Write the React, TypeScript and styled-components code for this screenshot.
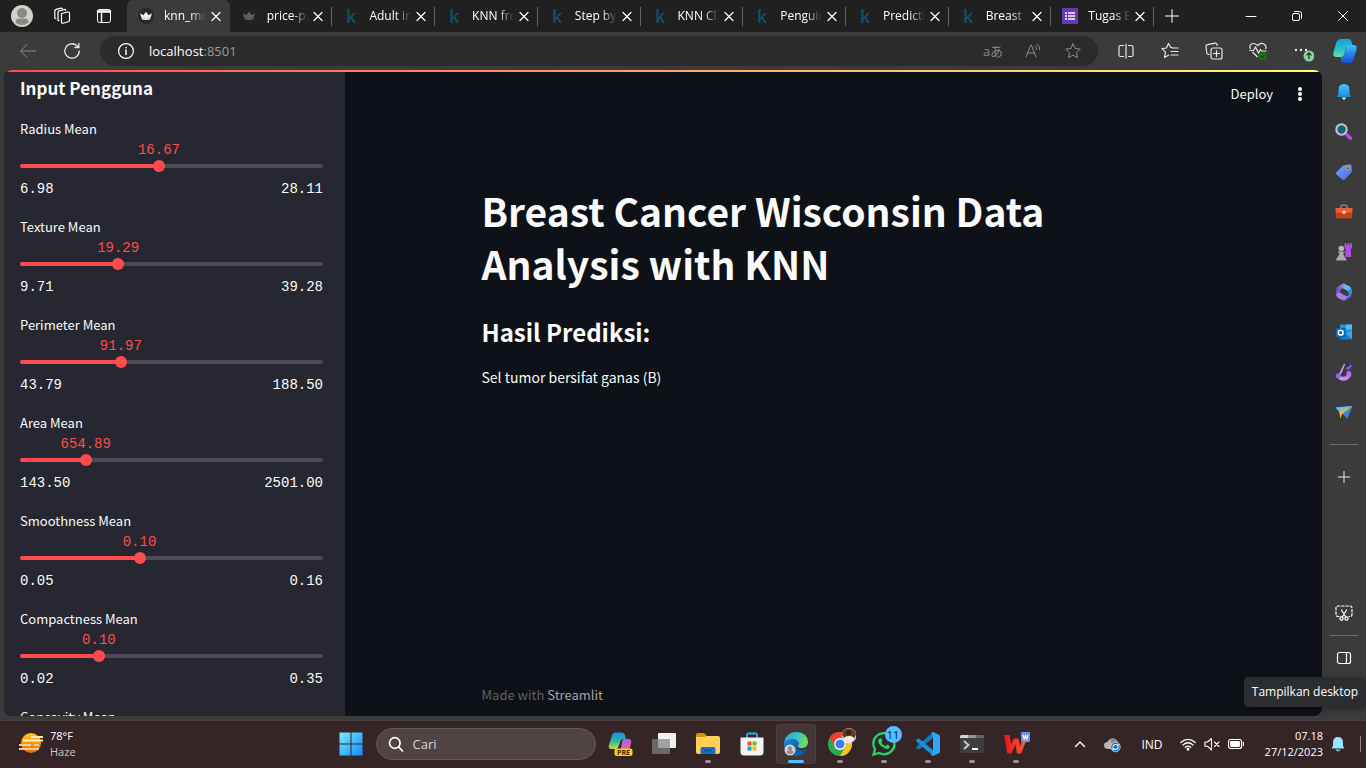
import React, { useState } from "react";
import styled, { createGlobalStyle } from "styled-components";

const uiFont = `"Open Sans", "Noto Sans", sans-serif`;
const appFont = `"Noto Sans CJK SC", "Open Sans", sans-serif`;
const monoFont = `"Liberation Mono", monospace`;

const GlobalStyle = createGlobalStyle`
  *, *::before, *::after { box-sizing: border-box; }
  body { margin: 0; background: #3b3b3b; font-family: ${uiFont}; overflow: hidden; }
  button { border: 0; padding: 0; background: none; color: inherit; font: inherit; cursor: default; }
  svg { display: block; flex: none; }
  h1, h2, p { margin: 0; }
`;

const Desktop = styled.div`
  position: relative;
  display: flex;
  flex-direction: column;
  height: 100vh;
  color: #fff;
`;

/* ---------- Browser tab strip ---------- */

const TabStrip = styled.header`
  display: flex;
  flex: none;
  height: 32px;
  background: #202020;
`;

const ProfileArea = styled.div`
  display: flex;
  width: 127px;
  padding-left: 2px;
`;

const StripButton = styled.button<{ $width?: number }>`
  display: flex;
  align-items: center;
  justify-content: center;
  width: ${(p) => p.$width ?? 46}px;
  height: 32px;
`;

const Tabs = styled.div`
  display: flex;
  flex: 1;
  min-width: 0;
`;

const TabItem = styled.div<{ $active?: boolean; $divided?: boolean }>`
  position: relative;
  display: flex;
  flex: 1 1 0;
  align-items: center;
  min-width: 0;
  padding: 0 6px 0 11px;
  border-radius: 6px 6px 0 0;
  background: ${(p) => (p.$active ? "#3b3b3b" : "transparent")};
  &::after {
    content: "";
    display: ${(p) => (p.$divided ? "block" : "none")};
    position: absolute;
    right: 0;
    top: 7px;
    width: 1px;
    height: 19px;
    background: #666;
  }
`;

const TabButton = styled.button`
  display: flex;
  flex: 1;
  align-items: center;
  gap: 10px;
  min-width: 0;
  height: 32px;
`;

const TabTitle = styled.span`
  flex: 1;
  overflow: hidden;
  margin-right: 2px;
  font-size: 12px;
  line-height: 16px;
  text-align: left;
  white-space: nowrap;
  mask-image: linear-gradient(to right, #000 62%, transparent 100%);
`;

const CloseButton = styled.button`
  display: flex;
  align-items: center;
  justify-content: center;
  width: 16px;
  height: 16px;
`;

const WindowControls = styled.div`
  display: flex;
  margin-left: 38px;
`;

/* ---------- Browser toolbar ---------- */

const Toolbar = styled.div`
  display: flex;
  flex: none;
  align-items: center;
  height: 38px;
  padding-left: 6px;
  background: #3b3b3b;
`;

const ToolButton = styled.button<{ $width?: number; $dim?: boolean }>`
  position: relative;
  display: flex;
  align-items: center;
  justify-content: center;
  width: ${(p) => p.$width ?? 44}px;
  height: 30px;
  color: ${(p) => (p.$dim ? "#8a8a8a" : "#e8e8e8")};
`;

const AddressBar = styled.div`
  display: flex;
  flex: 1;
  align-items: center;
  height: 30px;
  margin: 0 6px;
  padding: 0 5px 0 17px;
  border-radius: 15px;
  background: #2b2b2b;
`;

const Address = styled.a`
  flex: 1;
  margin-left: 14px;
  color: #fff;
  font-size: 13px;
  line-height: 20px;
  text-decoration: none;
`;

const Port = styled.span`
  color: #9a9a9a;
`;

const Translate = styled.span`
  font: 13px/20px "Open Sans", "Noto Sans CJK JP", sans-serif;
`;

/* ---------- Window body ---------- */

const WindowBody = styled.div`
  display: flex;
  flex: 1;
  min-height: 0;
  background: #3b3b3b;
`;

const Page = styled.div`
  position: relative;
  display: flex;
  flex: 1;
  min-width: 0;
  margin: 0 0 4px 4px;
  overflow: hidden;
  border-radius: 8px;
  background: #0e1117;
  color: #fafafa;
  font-family: ${appFont};
`;

const Decoration = styled.div`
  position: absolute;
  z-index: 2;
  inset: 0 0 auto 0;
  height: 2px;
  background: linear-gradient(90deg, #ff4b4b, #fffd80);
`;

const InputPanel = styled.aside`
  flex: none;
  width: 341px;
  overflow: hidden;
  padding: 6px 22px 0 16px;
  background: #262730;
`;

const PanelTitle = styled.h2`
  font-size: 17px;
  font-weight: 700;
  line-height: 24px;
`;

const SliderList = styled.div`
  display: flex;
  flex-direction: column;
  gap: 16px;
  margin-top: 18px;
`;

const Field = styled.div`
  display: flex;
  flex-direction: column;
  height: 82px;
`;

const FieldLabel = styled.label`
  flex: none;
  font-size: 13px;
  line-height: 22px;
`;

const ValueLane = styled.div`
  position: relative;
  flex: none;
  height: 19px;
`;

const Value = styled.output`
  position: absolute;
  bottom: 0;
  transform: translateX(-50%);
  color: #ff4b4b;
  font: 14px/18px ${monoFont};
`;

const Track = styled.div`
  position: relative;
  flex: none;
  height: 14px;
  &::before {
    content: "";
    position: absolute;
    inset: 5px 0;
    border-radius: 2px;
    background: linear-gradient(90deg, #ff4b4b var(--fill), #4b4c57 var(--fill));
  }
`;

const Range = styled.input`
  position: relative;
  appearance: none;
  display: block;
  width: calc(100% + 12px);
  height: 14px;
  margin: 0 -6px;
  background: transparent;
  &::-webkit-slider-thumb {
    appearance: none;
    width: 12px;
    height: 12px;
    border-radius: 50%;
    background: #ff4b4b;
  }
`;

const Bounds = styled.div`
  display: flex;
  flex: none;
  justify-content: space-between;
  margin-top: 7px;
  font: 14px/18px ${monoFont};
`;

const Main = styled.main`
  position: relative;
  display: flex;
  flex: 1;
  flex-direction: column;
  min-width: 0;
`;

const AppHeader = styled.div`
  display: flex;
  flex: none;
  align-items: center;
  justify-content: flex-end;
  height: 48px;
  padding-right: 14px;
  font-size: 13px;
  line-height: 18px;
`;

const KebabButton = styled.button`
  display: flex;
  justify-content: center;
  width: 16px;
  margin-left: 19px;
`;

const Content = styled.section`
  flex: 1;
  width: 100%;
  max-width: 736px;
  margin: 0 auto;
  padding: 66px 16px 0;
`;

const Title = styled.h1`
  font-size: 39px;
  font-weight: 700;
  line-height: 53px;
`;

const Subtitle = styled.h2`
  margin-top: 25px;
  font-size: 24px;
  font-weight: 700;
  line-height: 34px;
`;

const Result = styled.p`
  margin-top: 16px;
  font-size: 14px;
  line-height: 24px;
`;

const Footer = styled.footer`
  width: 100%;
  max-width: 736px;
  margin: 0 auto;
  padding: 0 16px 10px;
  color: #5f6065;
  font-size: 13px;
  line-height: 22px;
`;

const FooterLink = styled.a`
  color: #a3a4a8;
  text-decoration: none;
`;

/* ---------- Edge side bar ---------- */

const EdgeBar = styled.nav`
  display: flex;
  flex: none;
  flex-direction: column;
  align-items: center;
  width: 44px;
  padding: 2px 0 42px;
`;

const EdgeButton = styled.button`
  display: flex;
  flex: none;
  align-items: center;
  justify-content: center;
  width: 44px;
  height: 40px;
`;

const EdgeDivider = styled.div<{ $space: number }>`
  flex: none;
  width: 28px;
  height: 1px;
  margin: ${(p) => p.$space}px 0;
  background: #6c6c6c;
`;

const Spacer = styled.div`
  flex: 1;
`;

const Tooltip = styled.div`
  position: absolute;
  right: 0;
  bottom: 61px;
  z-index: 5;
  height: 30px;
  padding: 0 8px;
  border-radius: 4px;
  background: #2c2d30;
  box-shadow: 0 2px 6px rgba(0, 0, 0, 0.35);
  font-size: 12px;
  line-height: 30px;
`;

/* ---------- Task bar ---------- */

const TaskBar = styled.footer`
  display: grid;
  grid-template-columns: 1fr auto 1fr;
  flex: none;
  height: 48px;
  background: #352526;
  box-shadow: inset 0 1px #4c4141;
`;

const Weather = styled.button`
  display: flex;
  align-items: center;
  gap: 6px;
  padding-left: 18px;
  font-size: 11px;
  line-height: 16px;
  text-align: left;
`;

const WeatherText = styled.span`
  display: grid;
`;

const Muted = styled.span`
  color: #cfc9c9;
`;

const Apps = styled.div`
  display: flex;
  align-items: center;
`;

const AppButton = styled.button<{ $state?: "open" | "active" }>`
  position: relative;
  display: flex;
  align-items: center;
  justify-content: center;
  width: 40px;
  height: 40px;
  margin: 0 2px;
  border-radius: 4px;
  background: ${(p) => (p.$state === "active" ? "#443637" : "transparent")};
  box-shadow: ${(p) => (p.$state === "active" ? "inset 0 0 0 1px #4c3f40" : "none")};
  &::after {
    content: "";
    display: ${(p) => (p.$state ? "block" : "none")};
    position: absolute;
    bottom: 1px;
    width: ${(p) => (p.$state === "active" ? 16 : 6)}px;
    height: 3px;
    border-radius: 2px;
    background: ${(p) => (p.$state === "active" ? "#4cc2ff" : "#9d9393")};
  }
`;

const SearchBox = styled.label`
  display: flex;
  align-items: center;
  gap: 9px;
  width: 220px;
  height: 32px;
  margin: 0 2px 0 3px;
  padding-left: 11px;
  border: 1px solid #635859;
  border-radius: 16px;
  background: #504344;
`;

const SearchInput = styled.input`
  flex: 1;
  min-width: 0;
  padding: 0;
  border: 0;
  outline: 0;
  background: transparent;
  color: #fff;
  font: 13px/20px ${uiFont};
  &::placeholder { color: #d8d3d3; opacity: 1; }
`;

const CountBadge = styled.span`
  position: absolute;
  top: 2px;
  right: 2px;
  width: 17px;
  height: 17px;
  border-radius: 50%;
  background: #4cc2ff;
  color: #0c1b24;
  font-size: 11px;
  line-height: 17px;
  text-align: center;
`;

const Tray = styled.div`
  display: flex;
  align-items: center;
  justify-content: flex-end;
  padding-right: 5px;
`;

const TrayButton = styled.button<{ $width: number }>`
  display: flex;
  align-items: center;
  justify-content: center;
  width: ${(p) => p.$width}px;
  height: 40px;
  font-size: 12px;
`;

const Clock = styled.button`
  display: grid;
  width: 75px;
  font-size: 11px;
  line-height: 16px;
  text-align: right;
  white-space: nowrap;
`;

const ShowDesktop = styled.button`
  width: 1px;
  height: 16px;
  margin-left: 7px;
  background: #8f8687;
`;

/* ---------- Drawings ---------- */

type IconProps = { size?: number; box?: string; width?: number; children: React.ReactNode };

const Line = ({ size = 16, box = "0 0 16 16", width = 1, children }: IconProps) => (
  <svg width={size} height={size} viewBox={box} fill="none" stroke="currentColor" strokeWidth={width} strokeLinecap="round" strokeLinejoin="round" aria-hidden="true">
    {children}
  </svg>
);

const Art = ({ size = 18, box = "0 0 18 18", children }: IconProps) => (
  <svg width={size} height={size} viewBox={box} aria-hidden="true">{children}</svg>
);

const CloseIcon = () => <Line width={1.2}><path d="M4 4.500l8 8M12 4.500l-8 8" /></Line>;

const CrownIcon = ({ dim }: { dim?: boolean }) => (
  <Art size={16} box="0 0 16 16">
    <circle cx="8" cy="8" r="8" fill={dim ? "#232326" : "#262730"} />
    <path d="M2 5.200l3.400 2L8 3.800l2.600 3.400 3.400-2-2 6.300q-4 .9-8 0z" fill={dim ? "#626265" : "#f4f4f6"} />
    <path d="M4.200 9.800q3.800.8 7.600 0" stroke={dim ? "#434346" : "#aeaeb4"} strokeWidth=".6" fill="none" />
  </Art>
);

const KaggleIcon = () => (
  <Art size={16} box="0 0 16 16">
    <text x="3" y="15" fontFamily="Open Sans" fontWeight="600" fontSize="18" fill="#174f68">k</text>
  </Art>
);

const FormsIcon = () => (
  <Art size={16} box="0 0 16 16">
    <rect width="16" height="16" rx="1" fill="#673ab7" />
    <path d="M3 5h2M3 8h2M3 11h2M6 5h7M6 8h7M6 11h7" stroke="#fff" strokeWidth="1.700" />
  </Art>
);

const AvatarIcon = () => (
  <Art size={22} box="0 0 22 22">
    <circle cx="11" cy="11" r="11" fill="#d3d1ce" />
    <circle cx="11" cy="8" r="5" fill="#8c8985" />
    <path d="M4.500 17.500q0-4 3.500-4h6q3.500 0 3.500 4-6.500 5-13 0z" fill="#8c8985" />
  </Art>
);

const WorkspacesIcon = () => (
  <Line size={18} box="0 0 18 18" width={1.2}>
    <path d="M8.500 6.500l6.500-1.500q1.500-.2 1.500 1.200v7q0 1.200-1.200 1.500l-5 1.500q-1.800.3-1.800-1.300z" />
    <path d="M5 13.500V5.500q0-1.300 1.300-1.700l5-1.300q1.200-.2 1.500.8M6 13.600q-1 .2-1-.8" />
    <path d="M1.800 11V4q0-1.200 1.300-1.600L8 1.200q1-.2 1.400.6M2.800 11.300q-1 .2-1-.8" />
  </Line>
);

const TabActionsIcon = () => (
  <Line><rect x="1.500" y="1.500" width="13" height="13" rx="2" /><path d="M1.500 3h13M1.500 4h13M5.500 4.500v10" strokeWidth="1.400" /></Line>
);

const BackIcon = () => <Line size={18} box="0 0 18 18"><path d="M17 9H2M8 2.500L1.500 9 8 15.500" /></Line>;
const ReloadIcon = () => <Line size={18} box="0 0 18 18" width={1.3}><path d="M16.200 9a7.200 7.200 0 1 1-2.200-5.200L15.800 5.400M15.900 1.500v4h-4" /></Line>;
const InfoIcon = () => <Line size={18} box="0 0 18 18" width={1.2}><circle cx="9" cy="9" r="7.400" /><path d="M9 8v4.500M9 5.500v.2" strokeWidth="1.500" /></Line>;
const starPath = "M9 1.800l2.200 4.700 5.100.6-3.800 3.500 1 5.100L9 13.200l-4.500 2.500 1-5.100L1.700 7.100l5.100-.6z";
const StarIcon = () => <Line size={18} box="0 0 18 18"><path d={starPath} /></Line>;

const ReadAloudIcon = () => (
  <Line size={18} box="0 0 18 18"><path d="M2 15L6.800 3h.6L12 15M3.700 11h6.700M11 4q1.600 1 1.600 3.500M13 2q3 2 2.800 6" /></Line>
);
const SplitIcon = () => (
  <Line width={1.2}><path d="M8 1v14M5.500 2.500H2.500Q1 2.500 1 4v8Q1 13.500 2.500 13.500h3M10.500 2.500h3Q15 2.500 15 4v8Q15 13.500 13.500 13.500h-3" /></Line>
);
const FavoritesIcon = () => (
  <Line size={18} box="0 0 18 18" width={1.2}><path d="M11 5.700L9.800 5.500 7.500 1.500 5.400 6 1 6.700l3.400 3.500-.8 5.200 4.100-2.300M11.500 6H17M10 9.500h7M10 13h7" /></Line>
);
const CollectionsIcon = () => (
  <Line size={18} box="0 0 18 18" width={1.2}><rect x="6" y="6" width="11" height="11" rx="2" /><path d="M11.500 8.500v6M8.500 11.500h6M4 12.500l-.8-.2Q2 12 1.700 10.500L1 4.500Q.8 3 2.500 2.700L10 1.200q1.600-.2 2 1.300l.3 1" /></Line>
);
const HealthIcon = () => (
  <svg width="20" height="20" viewBox="0 0 20 20" fill="none" stroke="#e8e8e8" strokeWidth="1.200" strokeLinejoin="round" aria-hidden="true">
    <path d="M2.500 8Q1 4.500 3.500 3T9.800 4.500Q13 1 16 3t1.500 5M4.500 11l5 5" />
    <path d="M1.500 9.500h4l2-3.500 3 6 2-3.500 1 1.500h5" />
    <circle cx="14.500" cy="15" r="4" fill="#107c10" stroke="none" />
    <path d="M12.700 15l1.400 1.400 2.400-2.600" stroke="#0a4f0a" />
  </svg>
);
const MoreIcon = () => (
  <Art size={24} box="0 0 24 24">
    <circle cx="6" cy="11" r="1.200" fill="#eee" /><circle cx="11" cy="11" r="1.200" fill="#eee" /><circle cx="16" cy="11" r="1.200" fill="#eee" />
    <circle cx="19" cy="17" r="5.500" fill="#8ccf9a" />
    <path d="M19 20v-6M16.500 16.300l2.500-2.500 2.500 2.500" stroke="#17331d" strokeWidth="1.200" fill="none" />
  </Art>
);
const CopilotIcon = () => (
  <Art size={24} box="0 0 26 26">
    <defs>
      <linearGradient id="cpa" x1="0" y1="0" x2="0" y2="1"><stop stopColor="#159fe0" /><stop offset=".5" stopColor="#22bfd0" /><stop offset="1" stopColor="#66df92" /></linearGradient>
      <linearGradient id="cpb" x1="0" y1="0" x2="0" y2="1"><stop stopColor="#3ac2f5" /><stop offset=".6" stopColor="#2376e8" /><stop offset="1" stopColor="#1650d8" /></linearGradient>
    </defs>
    <path d="M9 0h8q2.500 0 3 2.500l1.200 5H17q-2.500 0-3.200 2.500L12 17q-.8 2.500-3 2.500H3.500q-4-.2-3-5L3.500 4Q4.800 0 9 0z" fill="url(#cpa)" />
    <path d="M17 26h-5q-3 0-3.400-3l-.6-3.500h1.200q2 0 2.800-2.500l2.300-8Q15 6.500 18 6.500h4.500q4 .2 3 5L22.500 22Q21.200 26 17 26z" fill="url(#cpb)" />
  </Art>
);

const BellArt = () => (
  <Art><defs><linearGradient id="bell" x1="0" y1="0" x2="0" y2="1"><stop stopColor="#46c7ff" /><stop offset="1" stopColor="#158bd9" /></linearGradient></defs>
    <path d="M6.500 14.500h5L9 17.200z" fill="#e4e6e8" /><path d="M9 1q5.500 0 5.500 6v4l1.800 3H1.700l1.800-3V7Q3.500 1 9 1z" fill="url(#bell)" /></Art>
);
const SearchArt = () => (
  <Art><path d="M11.500 11.500l4 3.700" stroke="#b84bea" strokeWidth="3.400" strokeLinecap="round" /><circle cx="6.500" cy="6.500" r="5.200" fill="#1e5f80" stroke="#c3c7c9" strokeWidth="2" /></Art>
);
const TagArt = () => (
  <Art><defs><linearGradient id="tag" x1="0" y1="0" x2="1" y2="1"><stop stopColor="#7ea4ff" /><stop offset="1" stopColor="#4566e6" /></linearGradient></defs>
    <path d="M9.500 2.200l5.500-.9q1.600 0 1.700 1.600L17 8q0 1-.8 1.800l-6.400 6.600q-1.300 1.200-2.600 0L1.500 11.500q-1.100-1.400 0-2.600L7.700 3q.8-.7 1.800-.8z" fill="url(#tag)" /><circle cx="12.800" cy="5.200" r="1.600" fill="#4b4a30" stroke="#f6c915" /></Art>
);
const ToolboxArt = () => (
  <Art><path d="M6 5V3.500Q6 2.200 7.200 2.200h3.600Q12 2.200 12 3.500V5" fill="none" stroke="#8d8f92" strokeWidth="1.300" /><rect x="1" y="8" width="16" height="7.500" rx="1" fill="#c4421e" /><path d="M1.500 5h15q1 0 1 1v3.500H.5V6q0-1 1-1z" fill="#ee6135" /><circle cx="9" cy="9.300" r="1.700" fill="#d7dadc" /></Art>
);
const GamesArt = () => (
  <Art><path d="M9.500 0v5l1.300 1-.8 8h6.200l-.5-8L17 5V0h-1.800v2h-1V0h-1.800v2h-1V0z" fill="#b04fe8" /><circle cx="6.300" cy="5.500" r="2.800" fill="#b4b5b6" /><path d="M3 8.500h6.500v1.300H8.300q0 3 2 5 1 .5 1 2.700H1.200q0-2.200 1-2.700 2-2 2-5H3z" fill="#aaa" /></Art>
);
const OfficeArt = () => (
  <Art><defs><linearGradient id="ofa" x1="0" y1="0" x2="1" y2="1"><stop stopColor="#57a2f0" /><stop offset="1" stopColor="#2f66d4" /></linearGradient><linearGradient id="ofb" x1="0" y1="0" x2="1" y2="0"><stop stopColor="#5f4bb4" /><stop offset="1" stopColor="#c08df0" /></linearGradient></defs>
    <path d="M8.500.500L14 3q2.500 1.200 2.500 3.800V11L12 7.500l-4-2Z" fill="#53c1f2" />
    <path d="M16.500 6.500v5q0 2.200-2 3.300L11 17q-2 1-4 0l5.500-3.500q1-.7 1-2V6z" fill="url(#ofa)" />
    <path d="M9 .500Q7.500.500 3.500 3.200 1 4.500 1 7v5.500L5 14V8q0-1.500 1.300-2.200L10 4z" fill="url(#ofb)" />
    <path d="M1 11l4-1.500L9 12l4 1.500L9 17Q7.500 17.600 3 15 1 13.500 1 11z" fill="#a67be4" /></Art>
);
const OutlookArt = () => (
  <Art><rect x="5" y="1.500" width="12" height="9" rx="1" fill="#2893df" /><path d="M11 1.500h6v5h-6z" fill="#50bdf4" /><path d="M4 16.500l7-7 6-2.500v9q0 .5-.6.5z" fill="#1480cf" /><path d="M17 7v9l-6.500-5.500z" fill="#35a9ea" /><rect x="1" y="5" width="9.500" height="9.500" rx="1" fill="#0f67b4" /><circle cx="5.700" cy="9.700" r="2.400" fill="none" stroke="#fff" strokeWidth="1.500" /></Art>
);
const BrushArt = () => (
  <Art><defs><linearGradient id="dg" x1="1" y1="0" x2="0" y2="1"><stop stopColor="#9c66f0" /><stop offset="1" stopColor="#f09cfa" /></linearGradient></defs>
    <path d="M13.500 7.500Q18 9 15.700 13.500 13 17.700 8.500 17.700 3.500 17.500 1.500 13l4-.5q1.500 2 4 1 2.800-1 2-4z" fill="url(#dg)" /><path d="M9 .800q1.300-.3 1 .9L6 11.500 3.900 11z" fill="#b79cfb" /><circle cx="3.300" cy="12.800" r="2.600" fill="#8a68ee" /><path d="M15.500 0l.8 2.200 2 .8-2 .8-.8 2.200-.8-1.200-1.700 3.200-.8-2-2-.8 2.500-1.200 2.300-1.200z" fill="#7d58ee" /></Art>
);
const PlaneArt = () => (
  <Art><path d="M.500 4.500L17.500 3 12.500 15.500 8 11.500z" fill="#2b8be0" /><path d="M.500 4.500L17.500 3 4.500 9z" fill="#61c2fb" /><path d="M4 8.500L17.500 3 7 11l-1.500 4.500z" fill="#ffb31a" /></Art>
);
const PlusIcon = ({ size = 16 }: { size?: number }) => <Line size={size}><path d="M8 1.500v13M1.500 8h13" /></Line>;
const SnipIcon = () => (
  <Line size={18} box="0 0 18 18" width={1.200}><path d="M4 12.500H3q-2 0-2-2V4q0-2 2-2h12q2 0 2 2v6.500q0 2-2 2h-1" strokeDasharray="2.400 1.800" /><path d="M6.500 6l4.200 7M11.500 6L7.300 13" /><circle cx="6.500" cy="14.500" r="1.600" /><circle cx="11.500" cy="14.500" r="1.600" /></Line>
);
const PanelIcon = () => <Line width={1.200}><rect x="1.500" y="2.500" width="13" height="11" rx="2" /><path d="M10.500 2.500v11" /></Line>;

const HazeArt = () => (
  <Art size={26} box="0 0 26 26"><defs><linearGradient id="sun" x1="0" y1="0" x2="0" y2="1"><stop stopColor="#ffc91a" /><stop offset="1" stopColor="#ec6a0c" /></linearGradient></defs>
    <circle cx="13" cy="12" r="10" fill="url(#sun)" />
    <path d="M13 6h12M5 9.500h20" stroke="#ffeebc" strokeWidth="2" /><path d="M1 14h12M16 14h5M1 18h20" stroke="#e8cc96" strokeWidth="2" /></Art>
);
const StartArt = () => (
  <Art size={24} box="0 0 24 24"><defs><linearGradient id="win" x1="0" y1="0" x2="1" y2="1"><stop stopColor="#7deaff" /><stop offset="1" stopColor="#0b8cf7" /></linearGradient></defs>
    <path d="M.500.500h11v11H.500zM12.500.500h11v11h-11zM.500 12.500h11v11H.500zM12.500 12.500h11v11h-11z" fill="url(#win)" /></Art>
);
const CopilotPreArt = () => (
  <Art size={26} box="0 0 26 26"><defs><linearGradient id="cl" x1="0" y1="0" x2="0" y2="1"><stop stopColor="#218be8" /><stop offset=".55" stopColor="#2bb999" /><stop offset="1" stopColor="#dcd541" /></linearGradient><linearGradient id="cr" x1="0" y1="0" x2="0" y2="1"><stop stopColor="#a763f2" /><stop offset="1" stopColor="#f0617f" /></linearGradient></defs>
    <path d="M8.500 1.500h6.500q2.500 0 3 2.500l1 4h-2.500q-2.500 0-3.300 2.700L11.500 16q-.8 2-3 2H4.500q-3.500 0-2.600-4L5 4.500Q5.700 1.500 8.500 1.500z" fill="url(#cl)" />
    <path d="M17 8h4.500q3.500 0 2.600 4L22 20h-8.500l1.500-9q.5-3 2-3z" fill="url(#cr)" />
    <rect x="7.500" y="17.500" width="18" height="7.500" rx="2" fill="#ffcb1f" />
    <text x="16.500" y="23.700" textAnchor="middle" fontFamily="Open Sans" fontWeight="700" fontSize="7" fill="#3a2a00">PRE</text></Art>
);
const TaskViewArt = () => <Art size={24} box="0 0 24 24"><rect y="7" width="18" height="15" rx="1" fill="#6b6869" /><rect x="6" y="1" width="18" height="15" rx="1" fill="#f1f0f0" /><path d="M6 7h12v9H6z" fill="#a3a1a2" /></Art>;
const FolderArt = () => <Art size={24} box="0 0 24 24"><path d="M0 3q0-2 2-2h6l3 3v4H0z" fill="#d9930b" /><path d="M0 5h8l3-1h11q2 0 2 2v14q0 2-2 2H2q-2 0-2-2z" fill="#ffd257" /><path d="M4.500 22v-5q0-2 2-2h11q2 0 2 2v5z" fill="#1272c8" /><path d="M8 18.500h8" stroke="#0b4b90" strokeWidth="1.500" /></Art>;
const StoreArt = () => (
  <Art size={24} box="0 0 24 24"><path d="M7 6V3q0-1.500 1.500-1.500h7Q17 1.500 17 3v3" fill="none" stroke="#27b1f0" strokeWidth="1.800" /><path d="M.500 5.500h23V20q0 3.500-3.500 3.500H4Q.500 23.500.500 20z" fill="#f4f3f4" />
    <path d="M7.500 9.500h4v4h-4z" fill="#f05125" /><path d="M12.500 9.500h4v4h-4z" fill="#7fba00" /><path d="M7.500 14.500h4v4h-4z" fill="#00a4ef" /><path d="M12.500 14.500h4v4h-4z" fill="#ffb900" /></Art>
);
const EdgeArt = () => (
  <Art size={24} box="0 0 24 24"><defs><linearGradient id="ea" x1="0" y1="0" x2="1" y2=".4"><stop stopColor="#2b9cdf" /><stop offset=".6" stopColor="#37c6c1" /><stop offset="1" stopColor="#6ade58" /></linearGradient><linearGradient id="eb" x1="0" y1="0" x2="1" y2="1"><stop stopColor="#2590e0" /><stop offset="1" stopColor="#0c4a94" /></linearGradient></defs>
    <circle cx="12" cy="12" r="12" fill="url(#eb)" />
    <path d="M.300 10.500Q2 0 12.500 0 23.500.500 24 10q-.3 6-6.500 6-4 0-3.800-1.800.2-.7 1-1.700.8-1.700-.8-3.600-1.900-2-5.100-2Q3.500 7 .300 10.500z" fill="url(#ea)" />
    <path d="M13.700 14.200q.5 2.300 5 2 2.300-.2 4.600-1.700L24 12l1 6-2.300-.8q-6 3-9.500-.7-1-1.200.5-2.300z" fill="#443637" /><path d="M13 12q-3 2-1 6 2.300 3.500 7 2.500-3 3.500-8 3.400-4-2-4.200-6.500Q7 13 11 11z" fill="#135fb0" />
    <circle cx="6" cy="18" r="5.500" fill="#d5d2d0" /><circle cx="6" cy="16.500" r="2.200" fill="#8f8c89" /><path d="M2.500 20.500q0-2 2-2h3q2 0 2 2-3.500 3-7 0z" fill="#8f8c89" /></Art>
);
const ChromeArt = () => (
  <Art size={32} box="0 0 32 32"><circle cx="16" cy="16" r="12" fill="#2da94f" /><path d="M5.600 10A12 12 0 0 1 26.400 10L16 10.500z" fill="#ea4335" /><path d="M5.600 10A12 12 0 0 1 16 4v12l-5 3z" fill="#ea4335" /><path d="M26.400 10A12 12 0 0 1 16 28l5.200-9V10z" fill="#fcc31e" /><circle cx="16" cy="16" r="5.900" fill="#fff" /><circle cx="16" cy="16" r="4.600" fill="#3b82f0" />
    <circle cx="25" cy="7.500" r="7.500" fill="#c9c1b8" /><path d="M18 7q0-6 7-6.500 7 .5 7 6.500l-2 3-5-3-4 4z" fill="#6b3a20" /><circle cx="24.500" cy="5" r="2.800" fill="#34241f" /><path d="M19 12q1-4 6-4 5 0 5 4-2 3-5.500 3.500-4-.5-5.500-3.500z" fill="#f0e9df" /></Art>
);
const WhatsAppArt = () => (
  <Art size={24} box="0 0 24 24"><path d="M1.500 22.500L3 17Q1.300 14.300 1.300 11.800A10.600 10.600 0 1 1 12 22.300q-2.600 0-5-1.300z" fill="none" stroke="#25d366" strokeWidth="2.300" /><path d="M7.500 6.500q1.500-1 2 .3l.8 2q.2.700-.9 1.700 1.500 2.600 4.200 3.700 1.200-1.600 1.800-1.400l2.200 1.100q.8.600-.3 2.200-1.500 1.600-4.300.5-4.400-1.700-6.400-5.600-1.200-2.800.9-4.500z" fill="#25d366" /></Art>
);
const CodeArt = () => (
  <Art size={24} box="0 0 24 24"><path d="M17 0v6L3 17.500l-1.500-.3-1.300-1.400q-.3-.6.3-1.200z" fill="#1478bd" /><path d="M17 24v-6L3 6.500l-1.500.3L.2 8.200q-.3.600.3 1.200z" fill="#1b8fda" /><path d="M17 0l6 2.800q1 .5 1 1.500v15.400q0 1-1 1.500L17 24q-.8.200-1.500-.5L17 18V6L15.500.500q.7-.7 1.500-.5z" fill="#2ea6f2" /></Art>
);
const TerminalArt = () => <Art size={24} box="0 0 24 24"><rect y="3" width="24" height="18" rx="1.500" fill="#3d3e3f" /><path d="M0 6V4.500Q0 3 1.500 3H8v3z" fill="#d5d5d5" /><path d="M8 3h8v3H8z" fill="#949494" /><path d="M16 3h6.500Q24 3 24 4.500V6h-8z" fill="#666" /><path d="M4 9l4.500 4L4 17" fill="none" stroke="#cacaca" strokeWidth="2" /><path d="M12 17h6" stroke="#fff" strokeWidth="2" /></Art>;
const WpsArt = () => (
  <Art size={28} box="0 0 28 28"><defs><linearGradient id="wps" x1="0" y1="0" x2="1" y2="0"><stop stopColor="#e3131d" /><stop offset="1" stopColor="#ff6433" /></linearGradient></defs>
    <path d="M2 5h5.500l1.700 9L12 8.500h4.500l1.500 8L20.500 9H25l-6 14.500h-4l-1.700-9-4 9h-4z" fill="url(#wps)" />
    <rect x="19" y="2" width="9" height="10" rx="1" fill="#6a93ee" /><path d="M21 5l1.200 4L23.500 5.700 24.800 9 26 5" fill="none" stroke="#fff" strokeWidth="1.200" /></Art>
);
const MagnifierIcon = () => <Line width={1.700}><circle cx="6.800" cy="7" r="5.300" /><path d="M10.800 11L14.500 15" /></Line>;
const CloudArt = () => <Art size={18} box="0 0 18 18"><path d="M5 14q-4-.3-4-3.500T4.500 7Q6 3 10 3.500t5 4.500q2 1 1.800 3.500T14 14z" fill="#bab5b5" /><path d="M7 5Q10 2 13 4.500t2 4.500l-5 1z" fill="#8b8787" /><circle cx="12.500" cy="12" r="4.800" fill="#1570c8" stroke="#fff" strokeWidth=".6" /><path d="M9.800 11.500q.6-2 2.700-2 1.500 0 2.500 1.300V9M15.200 12.500q-.6 2-2.700 2-1.500 0-2.500-1.300V15" fill="none" stroke="#fff" strokeWidth="1.200" /></Art>;
const WifiIcon = () => <Line width={1.300}><path d="M.800 6.500q7.200-6.300 14.400 0M3 9q5-4.400 10 0M5.300 11.300q2.700-2.300 5.400 0" /><circle cx="8" cy="13.300" r=".8" fill="currentColor" /></Line>;
const MuteIcon = () => <Line><path d="M1 6v4.200h2.500L7.500 14V2.500L3.500 6zM10.500 6l4.500 4.500M15 6l-4.500 4.500" strokeWidth="1.100" /></Line>;
const BatteryIcon = () => <Line><rect x=".500" y="3.500" width="13" height="9" rx="2" strokeWidth="1.200" /><rect x="2.500" y="5.500" width="9" height="5" rx=".5" fill="currentColor" /><path d="M15.300 6.500v3" strokeWidth="1.300" /></Line>;
const TrayBell = () => <Art size={16} box="0 0 16 16"><path d="M8 1q5 0 5 5.500V10l1.500 2.500h-13L3 10V6.500Q3 1 8 1z" fill="#99e4ff" /><path d="M5.500 13.500h5Q9.800 15.500 8 15.500t-2.500-2z" fill="#7ec3dc" /></Art>;
const CaretIcon = () => <Line width={1.400}><path d="M3.500 10.500L8 6l4.500 4.500" /></Line>;

/* ---------- Data ---------- */

type TabData = { title: string; icon: React.ReactNode };
const tabs: TabData[] = [
  { title: "knn_model", icon: <CrownIcon /> },
  { title: "price-pred", icon: <CrownIcon dim /> },
  { title: "Adult income", icon: <KaggleIcon /> },
  { title: "KNN from", icon: <KaggleIcon /> },
  { title: "Step by step", icon: <KaggleIcon /> },
  { title: "KNN Classifier", icon: <KaggleIcon /> },
  { title: "Penguins", icon: <KaggleIcon /> },
  { title: "Prediction", icon: <KaggleIcon /> },
  { title: "Breast Cancer", icon: <KaggleIcon /> },
  { title: "Tugas Besar", icon: <FormsIcon /> },
];

type SliderData = { label: string; min: number; max: number; start: number };
const sliders: SliderData[] = [
  { label: "Radius Mean", min: 6.98, max: 28.11, start: 16.67 },
  { label: "Texture Mean", min: 9.71, max: 39.28, start: 19.29 },
  { label: "Perimeter Mean", min: 43.79, max: 188.5, start: 91.97 },
  { label: "Area Mean", min: 143.5, max: 2501, start: 654.89 },
  { label: "Smoothness Mean", min: 0.0526, max: 0.1634, start: 0.0963 },
  { label: "Compactness Mean", min: 0.0194, max: 0.3454, start: 0.1043 },
  { label: "Concavity Mean", min: 0, max: 0.4268, start: 0.0888 },
];

const edgeApps: [string, React.ReactNode][] = [
  ["Notifications", <BellArt />], ["Search", <SearchArt />], ["Shopping", <TagArt />], ["Tools", <ToolboxArt />], ["Games", <GamesArt />],
  ["Microsoft 365", <OfficeArt />], ["Outlook", <OutlookArt />], ["Image Creator", <BrushArt />], ["Drop", <PlaneArt />],
];

const FeatureSlider = ({ label, min, max, start }: SliderData) => {
  const [value, setValue] = useState(start);
  const id = label.toLowerCase().replace(" ", "-");
  const fill = `${((value - min) / (max - min)) * 100}%`;
  return (
    <Field>
      <FieldLabel htmlFor={id}>{label}</FieldLabel>
      <ValueLane><Value htmlFor={id} style={{ left: fill }}>{value.toFixed(2)}</Value></ValueLane>
      <Track style={{ "--fill": fill } as React.CSSProperties}>
        <Range id={id} type="range" min={min} max={max} step="any" value={value} onChange={(e) => setValue(Number(e.target.value))} />
      </Track>
      <Bounds><span>{min.toFixed(2)}</span><span>{max.toFixed(2)}</span></Bounds>
    </Field>
  );
};

export default function App() {
  return (
    <Desktop>
      <GlobalStyle />
      <TabStrip>
        <ProfileArea>
          <StripButton $width={40} aria-label="Profile"><AvatarIcon /></StripButton>
          <StripButton $width={40} aria-label="Workspaces"><WorkspacesIcon /></StripButton>
          <StripButton $width={44} aria-label="Tab actions"><TabActionsIcon /></StripButton>
        </ProfileArea>
        <Tabs>
          {tabs.map((tab, i) => (
            <TabItem key={tab.title} $active={i === 0} $divided={i > 0}>
              <TabButton>{tab.icon}<TabTitle>{tab.title}</TabTitle></TabButton>
              <CloseButton aria-label="Close tab"><CloseIcon /></CloseButton>
            </TabItem>
          ))}
        </Tabs>
        <StripButton $width={36} aria-label="New tab"><PlusIcon /></StripButton>
        <WindowControls>
          <StripButton aria-label="Minimize"><Line><path d="M3 8.500h10" /></Line></StripButton>
          <StripButton aria-label="Restore"><Line><rect x="3.500" y="5.500" width="7" height="7" rx="1.500" /><path d="M5.500 3.500h5q2 0 2 2v5" /></Line></StripButton>
          <StripButton aria-label="Close"><Line><path d="M3.500 3.500l9 9M12.500 3.500l-9 9" /></Line></StripButton>
        </WindowControls>
      </TabStrip>

      <Toolbar>
        <ToolButton $dim aria-label="Back"><BackIcon /></ToolButton>
        <ToolButton aria-label="Refresh"><ReloadIcon /></ToolButton>
        <AddressBar>
          <InfoIcon />
          <Address href="#">localhost<Port>:8501</Port></Address>
          <ToolButton $width={40} $dim aria-label="Translate"><Translate>aあ</Translate></ToolButton>
          <ToolButton $width={40} $dim aria-label="Read aloud"><ReadAloudIcon /></ToolButton>
          <ToolButton $width={40} $dim aria-label="Add to favorites"><StarIcon /></ToolButton>
        </AddressBar>
        <ToolButton aria-label="Split screen"><SplitIcon /></ToolButton>
        <ToolButton aria-label="Favorites"><FavoritesIcon /></ToolButton>
        <ToolButton aria-label="Collections"><CollectionsIcon /></ToolButton>
        <ToolButton aria-label="Browser essentials"><HealthIcon /></ToolButton>
        <ToolButton aria-label="Settings"><MoreIcon /></ToolButton>
        <ToolButton $width={42} aria-label="Copilot"><CopilotIcon /></ToolButton>
      </Toolbar>

      <WindowBody>
        <Page>
          <Decoration />
          <InputPanel>
            <PanelTitle>Input Pengguna</PanelTitle>
            <SliderList>{sliders.map((s) => <FeatureSlider key={s.label} {...s} />)}</SliderList>
          </InputPanel>
          <Main>
            <AppHeader>
              <button>Deploy</button>
              <KebabButton aria-label="Main menu">
                <Art size={16} box="0 0 16 16"><g fill="#fafafa"><circle cx="8" cy="3" r="2" /><circle cx="8" cy="8" r="2" /><circle cx="8" cy="13" r="2" /></g></Art>
              </KebabButton>
            </AppHeader>
            <Content>
              <Title>Breast Cancer Wisconsin Data Analysis with KNN</Title>
              <Subtitle>Hasil Prediksi:</Subtitle>
              <Result>Sel tumor bersifat ganas (B)</Result>
            </Content>
            <Footer>Made with <FooterLink href="#">Streamlit</FooterLink></Footer>
          </Main>
        </Page>
        <EdgeBar>
          {edgeApps.map(([name, icon]) => <EdgeButton key={name} aria-label={name}>{icon}</EdgeButton>)}
          <EdgeDivider $space={12} />
          <EdgeButton aria-label="Customize"><PlusIcon size={14} /></EdgeButton>
          <Spacer />
          <EdgeButton aria-label="Screenshot"><SnipIcon /></EdgeButton>
          <EdgeDivider $space={2} />
          <EdgeButton aria-label="Hide sidebar"><PanelIcon /></EdgeButton>
        </EdgeBar>
      </WindowBody>

      <Tooltip role="tooltip">Tampilkan desktop</Tooltip>

      <TaskBar>
        <Weather><HazeArt /><WeatherText><span>78°F</span><Muted>Haze</Muted></WeatherText></Weather>
        <Apps>
          <AppButton aria-label="Start"><StartArt /></AppButton>
          <SearchBox><MagnifierIcon /><SearchInput type="text" placeholder="Cari" aria-label="Cari" /></SearchBox>
          <AppButton aria-label="Copilot preview"><CopilotPreArt /></AppButton>
          <AppButton aria-label="Task view"><TaskViewArt /></AppButton>
          <AppButton $state="open" aria-label="File Explorer"><FolderArt /></AppButton>
          <AppButton aria-label="Store"><StoreArt /></AppButton>
          <AppButton $state="active" aria-label="Edge"><EdgeArt /></AppButton>
          <AppButton $state="open" aria-label="Chrome"><ChromeArt /></AppButton>
          <AppButton $state="open" aria-label="WhatsApp"><WhatsAppArt /><CountBadge>11</CountBadge></AppButton>
          <AppButton $state="open" aria-label="Visual Studio Code"><CodeArt /></AppButton>
          <AppButton $state="open" aria-label="Terminal"><TerminalArt /></AppButton>
          <AppButton $state="open" aria-label="WPS Office"><WpsArt /></AppButton>
        </Apps>
        <Tray>
          <TrayButton $width={32} aria-label="Hidden icons"><CaretIcon /></TrayButton>
          <TrayButton $width={32} aria-label="OneDrive"><CloudArt /></TrayButton>
          <TrayButton $width={48}>IND</TrayButton>
          <TrayButton $width={24} aria-label="Network"><WifiIcon /></TrayButton>
          <TrayButton $width={24} aria-label="Volume"><MuteIcon /></TrayButton>
          <TrayButton $width={24} aria-label="Battery"><BatteryIcon /></TrayButton>
          <Clock><span>07.18</span><span>27/12/2023</span></Clock>
          <TrayButton $width={30} aria-label="Notifications"><TrayBell /></TrayButton>
          <ShowDesktop aria-label="Tampilkan desktop" />
        </Tray>
      </TaskBar>
    </Desktop>
  );
}
